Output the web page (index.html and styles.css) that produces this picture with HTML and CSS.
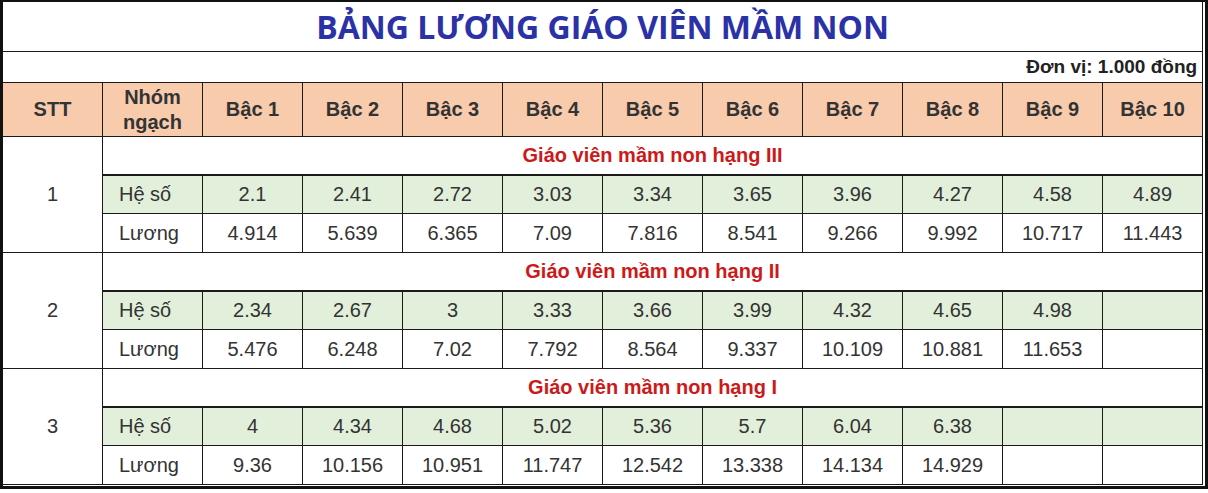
FILE: index.html
```html
<!DOCTYPE html>
<html lang="vi">
<head>
<meta charset="utf-8">
<title>Bảng lương giáo viên mầm non</title>
<link rel="stylesheet" href="styles.css">
</head>
<body>
<div class="frame">
<table class="salary">
  <colgroup>
    <col class="c"><col class="c"><col class="c"><col class="c"><col class="c"><col class="c">
    <col class="c"><col class="c"><col class="c"><col class="c"><col class="c"><col class="c">
  </colgroup>
  <tr class="r-title"><td colspan="12" class="title">BẢNG LƯƠNG GIÁO VIÊN MẦM NON</td></tr>
  <tr class="r-unit"><td colspan="12" class="unit">Đơn vị: 1.000 đồng</td></tr>
  <tr class="r-head">
    <th>STT</th><th class="two">Nhóm<br>ngạch</th>
    <th>Bậc 1</th><th>Bậc 2</th><th>Bậc 3</th><th>Bậc 4</th><th>Bậc 5</th>
    <th>Bậc 6</th><th>Bậc 7</th><th>Bậc 8</th><th>Bậc 9</th><th>Bậc 10</th>
  </tr>

  <tr class="r-group"><td rowspan="3" class="stt">1</td><td colspan="11" class="group">Giáo viên mầm non hạng III</td></tr>
  <tr class="r-hs"><td class="label">Hệ số</td><td>2.1</td><td>2.41</td><td>2.72</td><td>3.03</td><td>3.34</td><td>3.65</td><td>3.96</td><td>4.27</td><td>4.58</td><td>4.89</td></tr>
  <tr class="r-lg"><td class="label">Lương</td><td>4.914</td><td>5.639</td><td>6.365</td><td>7.09</td><td>7.816</td><td>8.541</td><td>9.266</td><td>9.992</td><td>10.717</td><td>11.443</td></tr>

  <tr class="r-group"><td rowspan="3" class="stt">2</td><td colspan="11" class="group">Giáo viên mầm non hạng II</td></tr>
  <tr class="r-hs"><td class="label">Hệ số</td><td>2.34</td><td>2.67</td><td>3</td><td>3.33</td><td>3.66</td><td>3.99</td><td>4.32</td><td>4.65</td><td>4.98</td><td></td></tr>
  <tr class="r-lg"><td class="label">Lương</td><td>5.476</td><td>6.248</td><td>7.02</td><td>7.792</td><td>8.564</td><td>9.337</td><td>10.109</td><td>10.881</td><td>11.653</td><td></td></tr>

  <tr class="r-group"><td rowspan="3" class="stt">3</td><td colspan="11" class="group">Giáo viên mầm non hạng I</td></tr>
  <tr class="r-hs"><td class="label">Hệ số</td><td>4</td><td>4.34</td><td>4.68</td><td>5.02</td><td>5.36</td><td>5.7</td><td>6.04</td><td>6.38</td><td></td><td></td></tr>
  <tr class="r-lg"><td class="label">Lương</td><td>9.36</td><td>10.156</td><td>10.951</td><td>11.747</td><td>12.542</td><td>13.338</td><td>14.134</td><td>14.929</td><td></td><td></td></tr>
</table>
</div>
</body>
</html>
```

FILE: styles.css
```css
html, body {
  margin: 0;
  padding: 0;
  background: #ffffff;
}

.frame {
  width: 1201px;
  border-top: 2px solid #111111;
  border-left: 3px solid #111111;
  border-right: 3px solid #111111;
  border-bottom: 3px solid #111111;
  padding-right: 1px;
  padding-bottom: 1px;
  box-shadow: 1px 1px 0 #bbbbbb;
}

.salary {
  border-collapse: separate;
  border-spacing: 0;
  table-layout: fixed;
  width: 1200px;
  font-family: "Liberation Sans", Arial, sans-serif;
  font-size: 20px;
  color: #333333;
}

.salary col.c {
  width: 100px;
}

.salary td,
.salary th {
  box-sizing: border-box;
  padding: 0;
  text-align: center;
  vertical-align: middle;
  border-right: 1px solid #1a1a1a;
  border-bottom: 1px solid #1a1a1a;
  white-space: nowrap;
}

.r-title td { height: 50px; }
.r-unit td { height: 31px; }
.r-head th { height: 54px; }
.r-group td { height: 39px; }
.r-hs td { height: 38px; }
.r-lg td { height: 39px; }

.title {
  font-family: "Open Sans", "Liberation Sans", sans-serif;
  font-weight: 700;
  font-size: 32px;
  color: #2b32a6;
  letter-spacing: 0;
  padding-top: 2px;
}

.unit {
  text-align: right !important;
  font-weight: 700;
  font-size: 19px;
  color: #222222;
  padding-right: 5px !important;
}

.r-head th {
  background: #f8cbad;
  font-weight: 700;
  font-size: 20px;
  color: #333333;
}

.r-head th.two {
  line-height: 25px;
}

.group {
  color: #cc1a1a;
  font-weight: 700;
  font-size: 20px;
}

.r-group .group {
  border-bottom: 2px solid #1a1a1a;
}

.r-hs td {
  background: #e2efda;
}

.stt {
  background: #ffffff;
}

.label {
  text-align: left !important;
  padding-left: 16px !important;
}
```
